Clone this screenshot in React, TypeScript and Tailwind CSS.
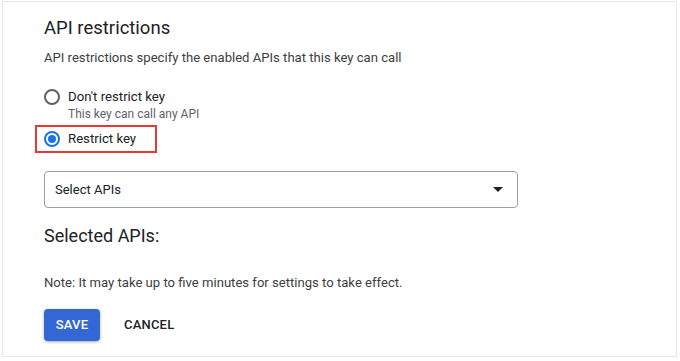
export default function App() {
  return (
    <div className="w-[680px] h-[361px] bg-white font-['Roboto','Liberation_Sans',sans-serif] text-[#202124]">
      <div className="ml-[2px] mt-px w-[675px] h-[356px] border border-[#e6e6e6] pl-[41px] pt-[12px]">
        <h2 className="text-[18.5px] leading-[28px] text-[#202124]">API restrictions</h2>
        <p className="mt-[6px] text-[13.1px] leading-[20px] text-[#3c4043]">
          API restrictions specify the enabled APIs that this key can call
        </p>

        <label className="mt-[19px] flex items-center gap-[8px] h-[20px]">
          <span className="w-[16px] h-[16px] rounded-full border-2 border-[#5f6368]" />
          <span className="text-[13.2px] leading-[20px] text-[#202124]">Don't restrict key</span>
        </label>
        <p className="ml-[24px] text-[12px] leading-[14px] text-[#5f6368]">This key can call any API</p>

        <div className="-ml-[9px] mt-[4px] w-[122px] h-[28px] border-2 border-[#e53935] flex items-center pl-[7px]">
          <label className="flex items-center gap-[8px]">
            <span className="w-[16px] h-[16px] rounded-full border-2 border-[#1a73e8] flex items-center justify-center">
              <span className="w-[8px] h-[8px] rounded-full bg-[#1a73e8]" />
            </span>
            <span className="text-[13.2px] leading-[20px] text-[#202124]">Restrict key</span>
          </label>
        </div>

        <div className="mt-[18px] w-[474px] h-[37px] rounded-[4px] border border-[#9aa0a6] flex items-center justify-between pl-[10px] pr-[14px]">
          <span className="text-[13px] text-[#202124]">Select APIs</span>
          <svg width="10" height="5" viewBox="0 0 10 5">
            <path d="M0 0h10L5 5z" fill="#202124" />
          </svg>
        </div>

        <h3 className="mt-[16px] text-[18px] leading-[24px] text-[#202124]">Selected APIs:</h3>

        <p className="mt-[25px] text-[13.1px] leading-[20px] text-[#3c4043]">
          Note: It may take up to five minutes for settings to take effect.
        </p>

        <div className="mt-[16px] flex items-center gap-[24px]">
          <button className="h-[32px] w-[56px] rounded-[4px] bg-[#3367d6] text-white text-[13px] font-medium tracking-[0.2px] shadow-[0_1px_3px_rgba(0,0,0,0.35)]">
            SAVE
          </button>
          <button className="text-[13px] font-medium text-[#202124] tracking-[0.2px]">CANCEL</button>
        </div>
      </div>
    </div>
  );
}
